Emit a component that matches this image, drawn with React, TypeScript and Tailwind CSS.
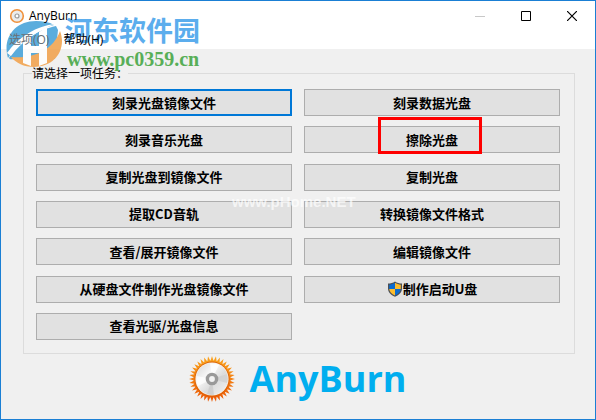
const leftTasks = [
  "刻录光盘镜像文件",
  "刻录音乐光盘",
  "复制光盘到镜像文件",
  "提取CD音轨",
  "查看/展开镜像文件",
  "从硬盘文件制作光盘镜像文件",
  "查看光驱/光盘信息",
];

const rightTasks = [
  "刻录数据光盘",
  "擦除光盘",
  "复制光盘",
  "转换镜像文件格式",
  "编辑镜像文件",
  "制作启动U盘",
];

// Flame teeth around the disc, one point every 10 degrees
const teeth = Array.from({ length: 72 }, (_, i) => {
  const r = i % 2 === 0 ? 23 : 18;
  const a = (i * Math.PI) / 36;
  return `${(24 + r * Math.sin(a)).toFixed(2)},${(24 - r * Math.cos(a)).toFixed(2)}`;
}).join(" ");

function DiscLogo() {
  return (
    <svg viewBox="0 0 48 48" className="size-12" aria-hidden="true">
      <defs>
        <linearGradient id="flame" x1="0" y1="0" x2="0" y2="1">
          <stop offset="0" stopColor="#fba41c" />
          <stop offset="1" stopColor="#ea5a08" />
        </linearGradient>
        <linearGradient id="disc" x1="0" y1="0" x2="1" y2="1">
          <stop offset="0" stopColor="#d4d4d4" />
          <stop offset="0.35" stopColor="#f6f6f6" />
          <stop offset="0.6" stopColor="#dcdcdc" />
          <stop offset="1" stopColor="#f2f2f2" />
        </linearGradient>
      </defs>
      <polygon points={teeth} fill="url(#flame)" />
      <circle cx="24" cy="24" r="18.5" fill="url(#flame)" />
      <circle cx="24" cy="24" r="17.4" fill="#d96008" />
      <circle cx="24" cy="24" r="16.6" fill="#fff4e0" />
      <circle cx="24" cy="24" r="16" fill="url(#disc)" />
      <path d="M24 24 22 8.3A16 16 0 0 1 31 10Z" fill="#fff" opacity=".8" />
      <path d="M24 24 39 19A16 16 0 0 1 39 28Z" fill="#cfcfcf" opacity=".7" />
      <path d="M24 24 19 39A16 16 0 0 0 26 39.8Z" fill="#c4c4c4" opacity=".6" />
      <path d="M24 24 8.5 21A16 16 0 0 0 10 31Z" fill="#fff" opacity=".7" />
      <circle cx="24" cy="24" r="4.6" fill="#f2f2f2" stroke="#999" strokeWidth="3.4" />
    </svg>
  );
}

function TitleIcon() {
  return (
    <svg viewBox="0 0 16 16" className="relative z-10 size-4" aria-hidden="true">
      <circle cx="8" cy="8" r="6.3" fill="#ececec" stroke="#f0913a" strokeWidth="1.6" />
      <circle cx="8" cy="8" r="2" fill="#fff" stroke="#999" strokeWidth="1.2" />
    </svg>
  );
}

function Shield() {
  return (
    <svg viewBox="0 0 16 16" className="size-4" aria-hidden="true">
      <path d="M8 .4C6 1.8 3.6 2.5 1 2.5v4.8c0 4 2.6 6.6 7 8.5 4.4-1.9 7-4.5 7-8.5V2.5C12.4 2.5 10 1.8 8 .4Z" fill="#4b4f55" />
      <path d="M8 1.8C6.2 2.9 4.300 3.5 2.2 3.7V8H8Z" fill="#0b6bd0" />
      <path d="M8 1.8c1.800 1.1 3.7 1.7 5.8 1.9V8H8Z" fill="#fdbc2c" />
      <path d="M2.2 8c.3 3 2.4 5 5.8 6.5V8Z" fill="#fdbc2c" />
      <path d="M13.8 8c-.3 3-2.4 5-5.8 6.500V8Z" fill="#0b6bd0" />
    </svg>
  );
}

function Watermark() {
  return (
    <div className="pointer-events-none absolute left-1 top-3 flex">
      <svg viewBox="0 0 60 56" className="h-14 w-15" aria-hidden="true">
        <g opacity=".85">
          {/* globe halves with a white swoosh between them */}
          <path d="M3 45C-3 25 10 8 31 8c7 0 13 1 18 4C33 16 14 27 3 45Z" fill="#3f9fd8" />
          <path d="M4 45C16 26 34 17 51 13L53 17 50 46H9C7 46 5 47 4 45Z" fill="#3f9fd8" />
          <path d="M55 18C62 36 50 54 29 54 19 54 11 50 6 44 27 46 48 38 55 18Z" fill="#f2a047" />
          <path d="M2 40C14 23 32 13 50 11 34 17 17 28 6 43Z" fill="#fff" />
          <path d="M18 28 26 22V33H34V19l8-5V50l-8 3V40H26V53l-8-3Z" fill="#fff" />
        </g>
      </svg>
      <div className="flex flex-col pt-0.5 font-bold">
        <span className="text-[27px] leading-8 text-[#4aa5ec] opacity-90">河东软件园</span>
        <span className="pl-0.5 font-['Liberation_Serif',serif] text-[20px] leading-6 text-[#58ae57]">
          www.pc0359.cn
        </span>
      </div>
    </div>
  );
}

const taskClass =
  "flex h-[27px] w-full items-center justify-center bg-[#e1e1e1] text-[13px] leading-4 font-bold text-black";

export default function App() {
  return (
    <div className="relative flex min-h-screen flex-col border border-[#1a7fd4] bg-[#f0f0f0] font-['Open_Sans','Noto_Sans_CJK_SC',sans-serif] text-xs text-black">
      <Watermark />
      <header className="flex h-[30px] items-center bg-white pl-2">
        <TitleIcon />
        <h1 className="relative z-10 ml-1 flex-1">AnyBurn</h1>
        <button type="button" aria-label="最小化" className="flex w-[46px] justify-center text-[#c8c8c8]">
          <svg viewBox="0 0 10 10" className="size-2.5" aria-hidden="true">
            <path d="M0 5.5H10" stroke="currentColor" />
          </svg>
        </button>
        <button type="button" aria-label="最大化" className="flex w-[46px] justify-center">
          <svg viewBox="0 0 10 10" className="size-2.5" aria-hidden="true">
            <path d="M.5.5h9v9h-9Z" fill="none" stroke="currentColor" />
          </svg>
        </button>
        <button type="button" aria-label="关闭" className="flex w-[46px] justify-center">
          <svg viewBox="0 0 10 10" className="size-2.5" aria-hidden="true">
            <path d="M0 0 10 10M10 0 0 10" stroke="currentColor" strokeWidth="1.2" />
          </svg>
        </button>
      </header>

      <nav className="flex h-[18px] items-center gap-3.5 bg-white px-2 leading-4">
        <button type="button" className="relative z-10 text-[#6a7075]">选项(O)</button>
        <button type="button" className="relative z-10">帮助(H)</button>
      </nav>

      <main className="flex flex-1 flex-col px-[22px] pr-5 pt-4">
        <fieldset className="border border-[#dcdcdc] pl-3 pr-3.5 pb-[13px]">
          <legend className="-ml-1 leading-4 font-['Noto_Sans_CJK_SC',sans-serif]">
            请选择一项任务：
          </legend>
          <div className="grid grid-cols-2 gap-3 pt-2 font-['Noto_Sans_CJK_SC',sans-serif]">
            <ul className="flex h-[251px] flex-col justify-between">
              {leftTasks.map((task, i) => (
                <li key={task}>
                  <button
                    type="button"
                    className={`${taskClass} ${
                      i === 0 ? "border-2 border-[#0078d7]" : "border border-[#adadad]"
                    }`}
                  >
                    {task}
                  </button>
                </li>
              ))}
            </ul>
            <ul className="flex h-[251px] flex-col justify-between">
              {rightTasks.map((task) => (
                <li key={task} className="relative">
                  <button type="button" className={`${taskClass} border border-[#adadad]`}>
                    {task === "制作启动U盘" && <Shield />}
                    {task}
                  </button>
                  {task === "擦除光盘" && (
                    <span className="pointer-events-none absolute -top-[9px] left-1/2 h-[37px] w-[104px] -translate-x-[54px] border-3 border-[#fe0000]" />
                  )}
                </li>
              ))}
              {/* keeps both columns on the same seven rows */}
              <li className="h-[27px]" aria-hidden="true" />
            </ul>
          </div>
        </fieldset>

        <div className="flex items-center justify-center gap-3.5 pr-1 pt-px">
          <DiscLogo />
          <span className="text-[36px] leading-[46px] font-bold text-[#00aeef]">AnyBurn</span>
        </div>
      </main>

      <span className="pointer-events-none absolute left-[231px] top-[193px] font-['Liberation_Sans',sans-serif] text-[15px] leading-4 font-bold text-white/70">
        www.pHome.NET
      </span>
    </div>
  );
}
